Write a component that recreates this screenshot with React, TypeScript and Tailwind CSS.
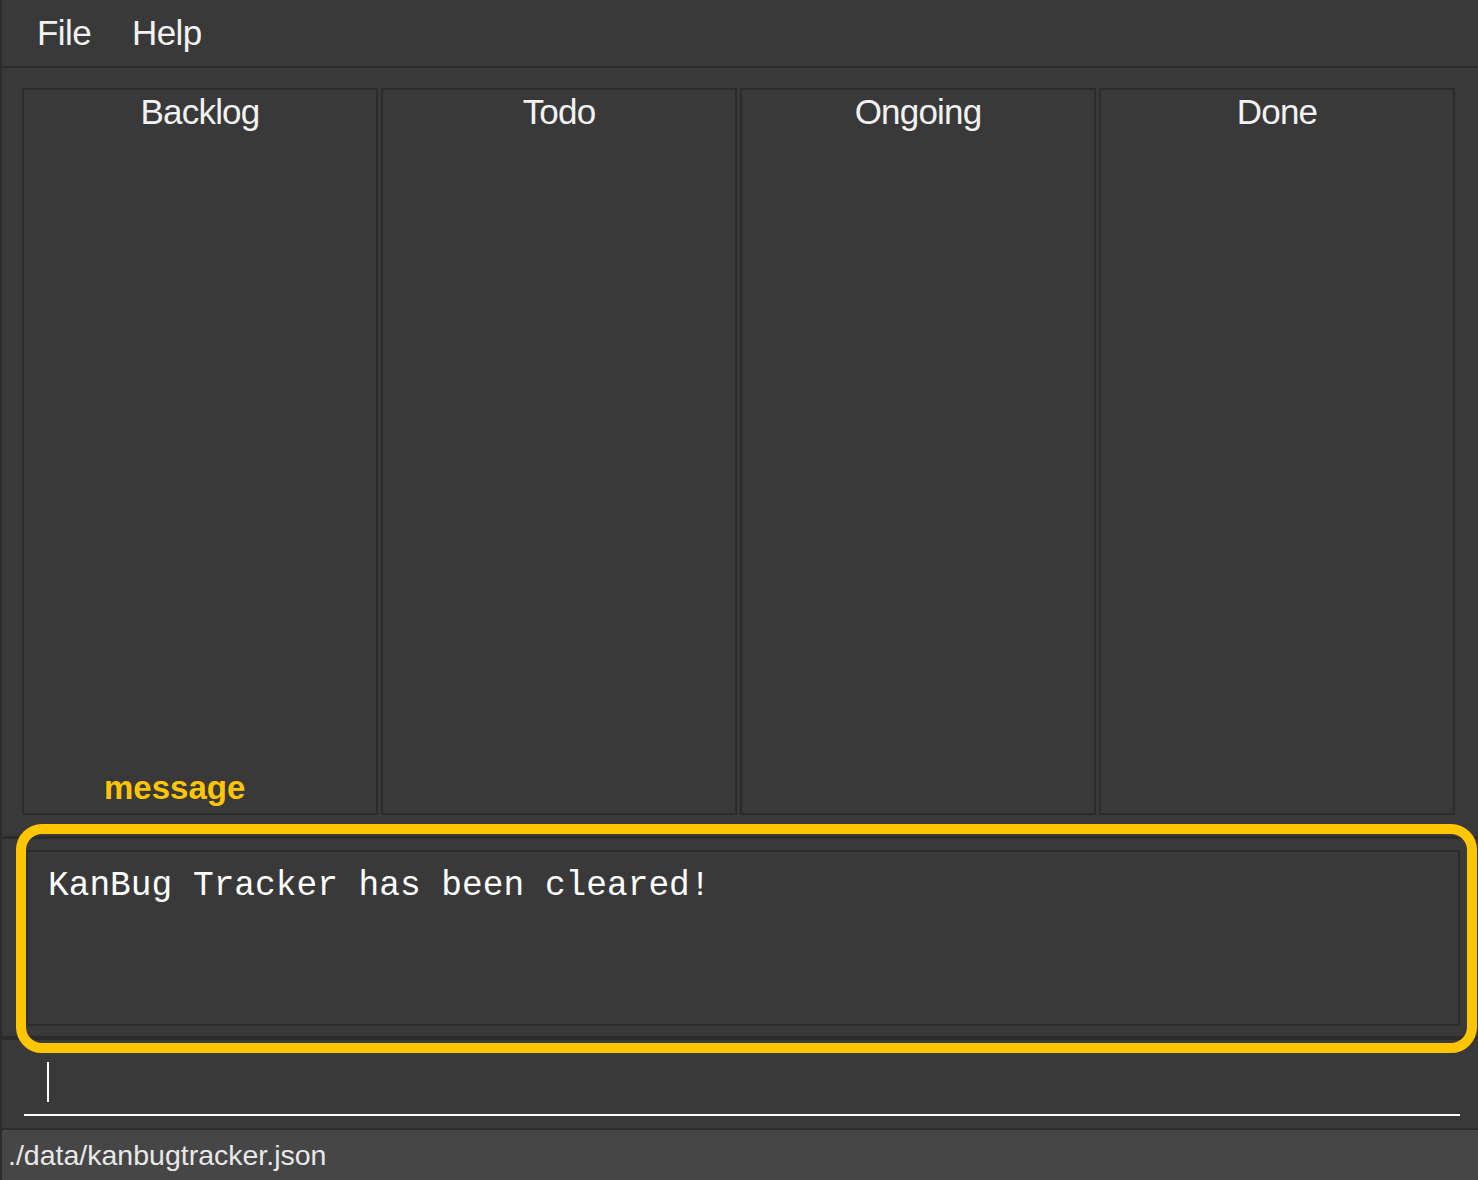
const columns = ["Backlog", "Todo", "Ongoing", "Done"];

const App = () => {
  return (
    <div
      className="relative flex h-[1180px] w-[1478px] flex-col overflow-hidden border-l-2 border-[#2c2c2c] bg-[#393939] text-[#f2f2f2]"
      style={{ fontFamily: '"Liberation Sans", Arial, sans-serif' }}
    >
      {/* Menu bar */}
      <div className="flex h-[68px] shrink-0 items-center gap-[41px] border-b-2 border-[#2c2c2c] pl-[35px] text-[35px] tracking-[-0.6px]">
        <span>File</span>
        <span>Help</span>
      </div>

      {/* Kanban columns */}
      <div className="grid shrink-0 grid-cols-4 gap-[3px] pb-[21px] pl-[20px] pr-[23px] pt-[20px]">
        {columns.map((name) => (
          <div key={name} className="h-[727px] border-2 border-[#2c2c2c]">
            <div className="pt-[2px] text-center text-[35px] leading-[40px] tracking-[-0.8px]">{name}</div>
          </div>
        ))}
      </div>

      {/* Result display */}
      <div className="shrink-0 border-t-[3px] border-[#2c2c2c] pb-[10px] pl-[24px] pr-[18px] pt-[11px]">
        <div
          className="h-[176px] border-2 border-[#2c2c2c] pl-[20px] pt-[14px] text-[34.5px] leading-[40px] text-white"
          style={{ fontFamily: '"Liberation Mono", "Courier New", monospace' }}
        >
          KanBug Tracker has been cleared!
        </div>
      </div>

      {/* Command box */}
      <div className="flex-1 border-t-4 border-[#2c2c2c] pl-[22px] pr-[18px] pt-[22px]">
        <div className="ml-[23px] h-[40px] w-[2px] bg-white" />
        <div className="mt-[12px] h-[2px] bg-white" />
      </div>

      {/* Status bar */}
      <div className="flex h-[52px] shrink-0 items-center border-t-2 border-[#2c2c2c] bg-[#464646] pl-[6px] text-[28.5px] text-[#e8e8e8]">
        ./data/kanbugtracker.json
      </div>

      {/* Annotation overlay */}
      <div className="absolute left-[102px] top-[763px] text-[33px] font-bold text-[#ffc600]">message</div>
      <div className="absolute left-[14px] top-[824px] h-[229px] w-[1461px] rounded-[26px] border-[10px] border-[#ffc600]" />
    </div>
  );
};

export default App;
